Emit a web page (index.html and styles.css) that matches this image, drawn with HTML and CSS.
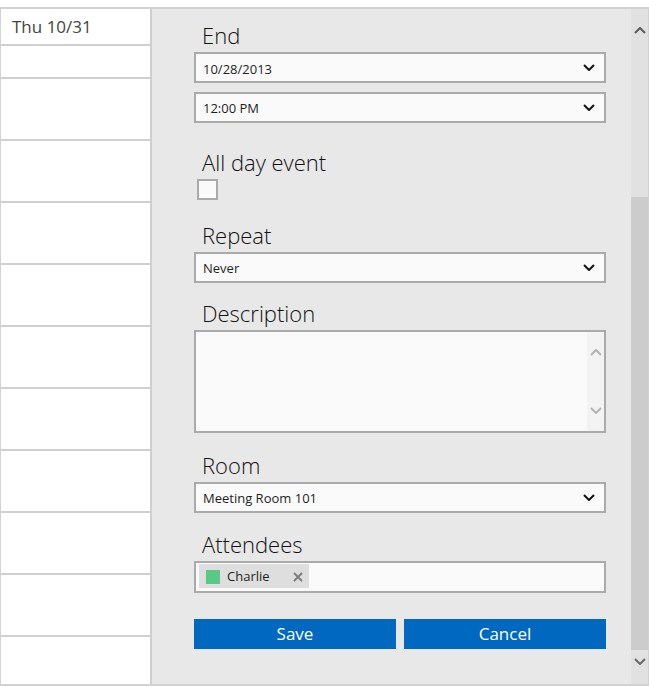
FILE: index.html
```html
<!DOCTYPE html>
<html>
<head>
<meta charset="utf-8">
<link rel="stylesheet" href="styles.css">
</head>
<body>
<div class="frame">
  <div class="days">
    <div class="day-head">Thu 10/31</div>
    <div class="slot slot-short"></div>
    <div class="slot"></div>
    <div class="slot"></div>
    <div class="slot"></div>
    <div class="slot"></div>
    <div class="slot"></div>
    <div class="slot"></div>
    <div class="slot"></div>
    <div class="slot"></div>
    <div class="slot"></div>
    <div class="slot slot-last"></div>
  </div>
  <div class="panel">
    <div class="form">
      <div class="group">
        <div class="label">End</div>
        <div class="select select-low"><span>10/28/2013</span><svg class="chev" width="12" height="7" viewBox="0 0 12 7"><path d="M1 1 L6 6 L11 1" fill="none" stroke="#111" stroke-width="2"/></svg></div>
        <div class="select select-next"><span>12:00 PM</span><svg class="chev" width="12" height="7" viewBox="0 0 12 7"><path d="M1 1 L6 6 L11 1" fill="none" stroke="#111" stroke-width="2"/></svg></div>
      </div>
      <div class="group g-allday">
        <div class="label">All day event</div>
        <div class="checkbox"></div>
      </div>
      <div class="group g-repeat">
        <div class="label">Repeat</div>
        <div class="select"><span>Never</span><svg class="chev" width="12" height="7" viewBox="0 0 12 7"><path d="M1 1 L6 6 L11 1" fill="none" stroke="#111" stroke-width="2"/></svg></div>
      </div>
      <div class="group g-desc">
        <div class="label">Description</div>
        <div class="textarea">
          <div class="ta-bar">
            <svg width="12" height="7" viewBox="0 0 12 7"><path d="M1 6 L6 1 L11 6" fill="none" stroke="#b3b3b3" stroke-width="2"/></svg>
            <svg width="12" height="7" viewBox="0 0 12 7"><path d="M1 1 L6 6 L11 1" fill="none" stroke="#b3b3b3" stroke-width="2"/></svg>
          </div>
        </div>
      </div>
      <div class="group g-room">
        <div class="label">Room</div>
        <div class="select"><span>Meeting Room 101</span><svg class="chev" width="12" height="7" viewBox="0 0 12 7"><path d="M1 1 L6 6 L11 1" fill="none" stroke="#111" stroke-width="2"/></svg></div>
      </div>
      <div class="group g-att">
        <div class="label">Attendees</div>
        <div class="multi">
          <div class="chip">
            <span class="swatch"></span>
            <span class="chip-text">Charlie</span>
            <svg class="chip-x" width="10" height="10" viewBox="0 0 10 10"><path d="M1 1 L9 9 M9 1 L1 9" fill="none" stroke="#7a7a7a" stroke-width="1.8"/></svg>
          </div>
        </div>
      </div>
      <div class="buttons">
        <div class="btn">Save</div>
        <div class="btn">Cancel</div>
      </div>
    </div>
  </div>
  <div class="scrollbar">
    <div class="sb-up"><svg width="12" height="7" viewBox="0 0 12 7"><path d="M1 6 L6 1 L11 6" fill="none" stroke="#5a5a5a" stroke-width="2"/></svg></div>
    <div class="sb-space"></div>
    <div class="sb-thumb"></div>
    <div class="sb-down"><svg width="12" height="7" viewBox="0 0 12 7"><path d="M1 1 L6 6 L11 1" fill="none" stroke="#6a6a6a" stroke-width="2"/></svg></div>
  </div>
</div>
</body>
</html>
```

FILE: styles.css
```css
html, body {
  margin: 0;
  padding: 0;
  background: #ffffff;
}

body {
  font-family: "Open Sans", "Noto Sans", "Liberation Sans", sans-serif;
  color: #1e1e1e;
}

.frame {
  margin-top: 7px;
  width: 649px;
  height: 679px;
  box-sizing: border-box;
  border-top: 2px solid #d2d2d2;
  border-bottom: 2px solid #d2d2d2;
  border-left: 1px solid #d2d2d2;
  border-right: 1px solid #d2d2d2;
  display: flex;
}

.days {
  width: 149px;
  border-right: 2px solid #cfcfcf;
  background: #ffffff;
  display: flex;
  flex-direction: column;
}

.day-head {
  height: 35px;
  line-height: 36px;
  padding-left: 11px;
  font-size: 17px;
  color: #444444;
  border-bottom: 2px solid #d0d0d0;
  flex: none;
}

.slot {
  height: 60px;
  border-bottom: 2px solid #d0d0d0;
  flex: none;
}

.slot-short {
  height: 31px;
}

.slot-last {
  flex: 1;
  border-bottom: none;
}

.panel {
  width: 479px;
  background: #e8e8e8;
  padding-left: 42px;
  box-sizing: border-box;
  overflow: hidden;
}

.form {
  width: 412px;
  padding-top: 14px;
}

.label {
  font-size: 22px;
  font-weight: 300;
  line-height: 24px;
  height: 24px;
  margin: 0 0 5px 8px;
  color: #111111;
  white-space: nowrap;
}

.select {
  height: 31px;
  box-sizing: border-box;
  border: 2px solid #aaaaaa;
  background: #fafafa;
  padding: 2px 9px 0 7px;
  font-size: 13px;
  line-height: 25px;
  color: #1e1e1e;
  display: flex;
  align-items: center;
  justify-content: space-between;
}

.select span {
  line-height: 25px;
}

.select .chev {
  margin-top: -2px;
}

.select-low {
  padding-top: 4px;
}

.select-low .chev {
  margin-top: -4px;
}

.select-next {
  margin-top: 9px;
}

.chev {
  display: block;
  flex: none;
}

.g-allday {
  margin-top: 27px;
}

.checkbox {
  width: 21px;
  height: 21px;
  box-sizing: border-box;
  border: 2px solid #aaaaaa;
  background: #fafafa;
  margin-left: 3px;
}

.g-repeat {
  margin-top: 23px;
}

.g-desc {
  margin-top: 18px;
}

.textarea {
  height: 103px;
  box-sizing: border-box;
  border: 2px solid #aaaaaa;
  background: #fafafa;
  display: flex;
  justify-content: flex-end;
}

.ta-bar {
  width: 17px;
  background: #f3f3f3;
  display: flex;
  flex-direction: column;
  justify-content: space-between;
  align-items: center;
  padding: 17px 0 17px 0;
}

.ta-bar svg {
  display: block;
}

.g-room {
  margin-top: 20px;
}

.g-att {
  margin-top: 19px;
}

.multi {
  height: 32px;
  box-sizing: border-box;
  border: 2px solid #aaaaaa;
  background: #fafafa;
  padding: 1px 3px;
  display: flex;
  align-items: flex-start;
}

.chip {
  height: 24px;
  background: #dedede;
  display: flex;
  align-items: center;
  padding: 0 6px 0 7px;
}

.swatch {
  width: 14px;
  height: 14px;
  background: #59c985;
  margin-right: 7px;
  margin-top: 1px;
}

.chip-text {
  font-size: 13px;
  line-height: 24px;
  color: #1e1e1e;
}

.chip-x {
  display: block;
  margin-left: 23px;
  margin-top: 1px;
}

.buttons {
  margin-top: 26px;
  display: flex;
  gap: 8px;
}

.btn {
  flex: 1;
  height: 30px;
  line-height: 30px;
  background: #0168c0;
  color: #ffffff;
  font-size: 17px;
  text-align: center;
}

.scrollbar {
  width: 17px;
  background: #e1e1e1;
  display: flex;
  flex-direction: column;
}

.sb-up {
  height: 42px;
  display: flex;
  align-items: center;
  justify-content: center;
  flex: none;
}

.sb-space {
  height: 146px;
  flex: none;
}

.sb-thumb {
  height: 453px;
  background: #cccccc;
  flex: none;
}

.sb-down {
  flex: 1;
  display: flex;
  justify-content: center;
  align-items: flex-start;
  padding-top: 8px;
}

.sb-up svg, .sb-down svg {
  display: block;
}
```
